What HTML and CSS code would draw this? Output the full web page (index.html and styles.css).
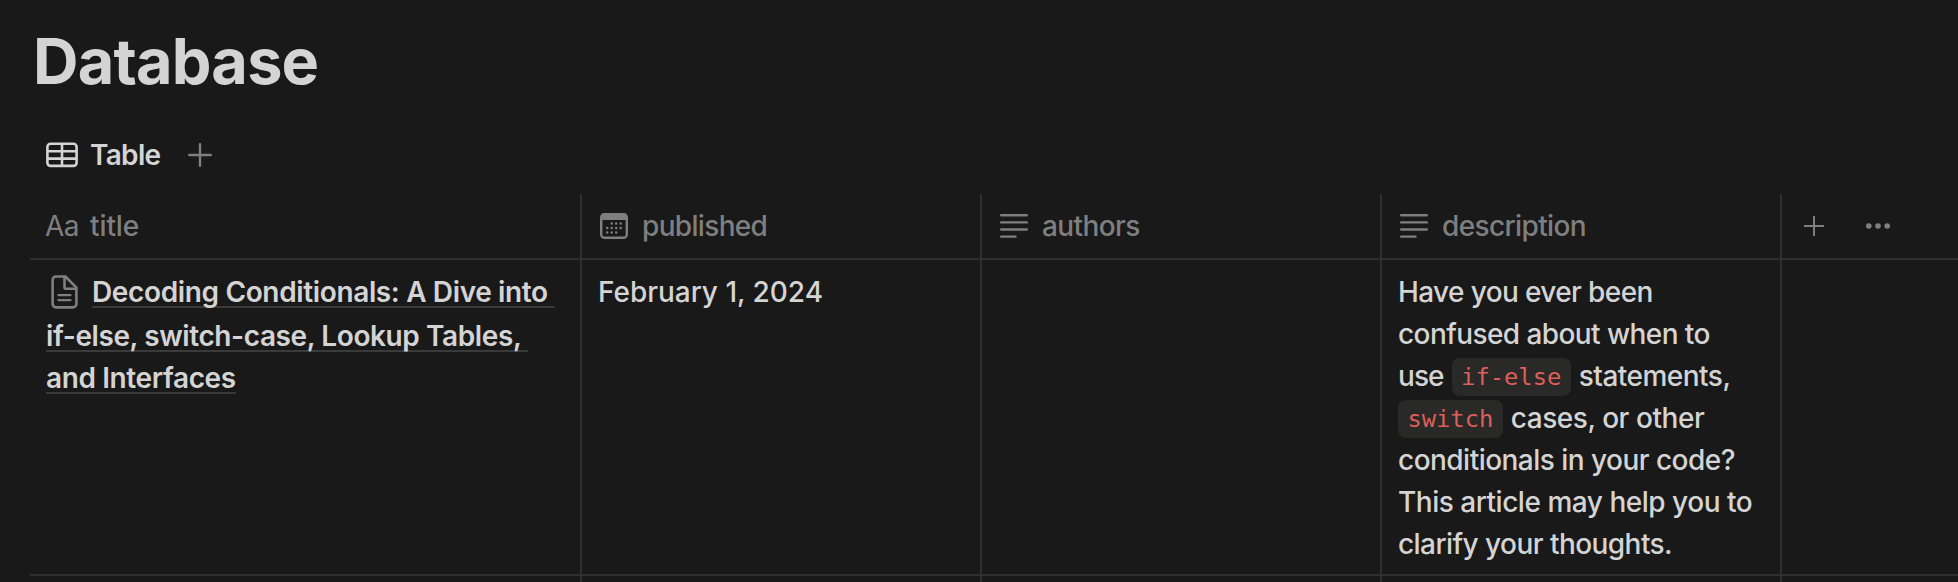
FILE: index.html
```html
<!DOCTYPE html>
<html lang="en">
<head>
<meta charset="utf-8">
<title>Database</title>
<link rel="stylesheet" href="styles.css">
</head>
<body>
<main class="page">
  <h1 class="heading"><span>Database</span></h1>
  <nav class="views">
    <svg class="table-icon" width="32" height="26" viewBox="0 0 32 26" fill="none" stroke="currentColor" stroke-width="2.6"><rect x="1.4" y="1.7" width="29.2" height="22.2" rx="3.2"/><path d="M2 9.2h28M2 16.6h28M16 2v22"/></svg>
    <span class="view-name">Table</span>
    <svg class="add-view" width="24" height="24" viewBox="0 0 24 24" fill="none" stroke="currentColor" stroke-width="2.4" stroke-linecap="round"><path d="M12 1.2v21.6M1.2 12h21.6"/></svg>
  </nav>
  <section class="table">
    <div class="row head">
      <div class="cell"><span class="aa">Aa</span><span class="label-title">title</span></div>
      <div class="cell">
        <svg class="prop-icon" width="28" height="28" viewBox="0 0 28 28"><rect x="1.2" y="2.2" width="25.6" height="23.6" rx="3.4" fill="none" stroke="currentColor" stroke-width="2.4"/><path d="M1 8V5a4 4 0 0 1 4-4h18a4 4 0 0 1 4 4v3z" fill="currentColor"/><path d="M11.7 11.5h0M16.2 11.5h0M20.7 11.5h0M7.2 16h0M11.7 16h0M16.2 16h0M20.7 16h0M7.2 20.5h0M11.7 20.5h0M16.2 20.5h0" stroke="currentColor" stroke-width="2.5" stroke-linecap="round"/></svg>
        <span class="label-published">published</span>
      </div>
      <div class="cell">
        <svg class="prop-icon" width="28" height="28" viewBox="0 0 28 28" stroke="currentColor" stroke-width="2.4" stroke-linecap="round"><path d="M1.2 3.3h25.6M1.2 10.4h25.6M1.2 17.5h25.6M1.2 24.6h14.4"/></svg>
        <span class="label-authors">authors</span>
      </div>
      <div class="cell">
        <svg class="prop-icon" width="28" height="28" viewBox="0 0 28 28" stroke="currentColor" stroke-width="2.4" stroke-linecap="round"><path d="M1.2 3.3h25.6M1.2 10.4h25.6M1.2 17.5h25.6M1.2 24.6h14.4"/></svg>
        <span class="label-description">description</span>
      </div>
      <div class="cell actions">
        <svg width="20" height="22" viewBox="0 0 20 22" stroke="currentColor" stroke-width="2"><path d="M10 1v20M0 11h20"/></svg>
        <svg width="24" height="6" viewBox="0 0 24 6" fill="currentColor"><circle cx="2.8" cy="3" r="2.8"/><circle cx="12" cy="3" r="2.8"/><circle cx="21.2" cy="3" r="2.8"/></svg>
      </div>
    </div>
    <div class="row body">
      <div class="cell name">
        <div class="line first"><svg class="page-icon" width="27" height="34" viewBox="0 0 27 34" fill="none" stroke="currentColor" stroke-width="2.6" stroke-linejoin="round"><path d="M5 1.5h9.400L25.400 12.600V29a3.400 3.400 0 0 1-3.400 3.400H5A3.400 3.400 0 0 1 1.600 29V4.900A3.400 3.400 0 0 1 5 1.500z"/><path d="M13.500 2v10.200a1.500 1.500 0 0 0 1.500 1.500H25"/><path d="M7.500 20.200h12M7.500 25.200h12" stroke-width="2.200" stroke-linecap="round"/></svg><span class="link t1">Decoding Conditionals: A Dive into&nbsp;</span></div>
        <div class="line"><span class="link t2">if-else, switch-case, Lookup Tables,&nbsp;</span></div>
        <div class="line"><span class="link t3">and Interfaces</span></div>
      </div>
      <div class="cell"><div class="line date">February 1, 2024</div></div>
      <div class="cell"></div>
      <div class="cell desc">
        <div class="line"><span class="d1">Have you ever been</span></div>
        <div class="line"><span class="d2">confused about when to</span></div>
        <div class="line"><span class="d3">use</span><code>if-else</code><span class="d4">statements,</span></div>
        <div class="line"><code class="lead">switch</code><span class="d5">cases, or other</span></div>
        <div class="line"><span class="d6">conditionals in your code?</span></div>
        <div class="line"><span class="d7">This article may help you to</span></div>
        <div class="line"><span class="d8">clarify your thoughts.</span></div>
      </div>
      <div class="cell"></div>
    </div>
    <div class="row next"><div class="cell"></div><div class="cell"></div><div class="cell"></div><div class="cell"></div><div class="cell"></div></div>
  </section>
</main>
</body>
</html>
```
FILE: styles.css
```css
* { box-sizing: border-box; }
body {
  margin: 0;
  height: 582px;
  overflow: hidden;
  background: #191919;
  color: #d4d4d4;
  font: 450 28px/42px Inter, sans-serif;
}
.page { padding-left: 30px; }
.heading {
  margin: 0;
  height: 124px;
  padding: 22px 0 0 3px;
  font-size: 63px;
  line-height: 78px;
  font-weight: 700;
  letter-spacing: -0.8px;
}
.views {
  display: flex;
  align-items: center;
  height: 70px;
  padding: 0 0 8px 16px;
}
.view-name { margin-left: 12px; width: 98px; font-weight: 600; letter-spacing: -0.7px; }
.add-view { color: #7f7f7f; }
.row {
  display: grid;
  grid-template-columns: 552px 400px 400px 400px 1fr;
  border-bottom: 2px solid #2f2f2f;
}
.cell { border-right: 2px solid #2f2f2f; white-space: nowrap; }
.cell:last-child { border-right: 0; }
.head { height: 66px; color: #7f7f7f; }
.head .cell { display: flex; align-items: center; padding-left: 18px; }
.head .cell:first-child { padding-left: 15px; }
.aa { width: 45px; letter-spacing: -0.5px; font-weight: 400; }
.prop-icon { margin: 0 14px 0 0; }
.label-title { letter-spacing: -0.1px; }
.label-published { letter-spacing: -0.67px; }
.label-authors { letter-spacing: -0.6px; }
.label-description { letter-spacing: -0.62px; }
.head .actions { padding-left: 22px; gap: 42px; }
.body { height: 316px; }
.body .cell { padding: 11px 0 0 16px; }
.line { height: 42px; display: flex; align-items: center; }
.first { height: 44px; padding-bottom: 2px; }
.page-icon { margin: 0 14px 0 5px; color: #7f7f7f; }
.link {
  font-weight: 600;
  text-decoration: underline #3a3a3a 2px;
  text-underline-offset: 4px;
  text-decoration-skip-ink: none;
}
.t1 { letter-spacing: -0.36px; }
.t2 { letter-spacing: -0.4px; }
.t3 { letter-spacing: -0.38px; }
.date { letter-spacing: -0.03px; }
.d1 { letter-spacing: -0.62px; }
.d2 { letter-spacing: -0.58px; }
.d3 { letter-spacing: -0.9px; }
.d4 { letter-spacing: -0.52px; }
.d5 { letter-spacing: -0.46px; }
.d6 { letter-spacing: -0.53px; }
.d7 { letter-spacing: -0.48px; }
.d8 { letter-spacing: -0.56px; }
code {
  height: 38px;
  margin: 2px 8px 0 8px;
  padding: 0 9.4px;
  border-radius: 8px;
  background: #292927;
  color: #de5e5a;
  font: 23.8px/38px "DejaVu Sans Mono", monospace;
}
.lead { margin-left: 0; }
.next { height: 6px; border: 0; }
```
